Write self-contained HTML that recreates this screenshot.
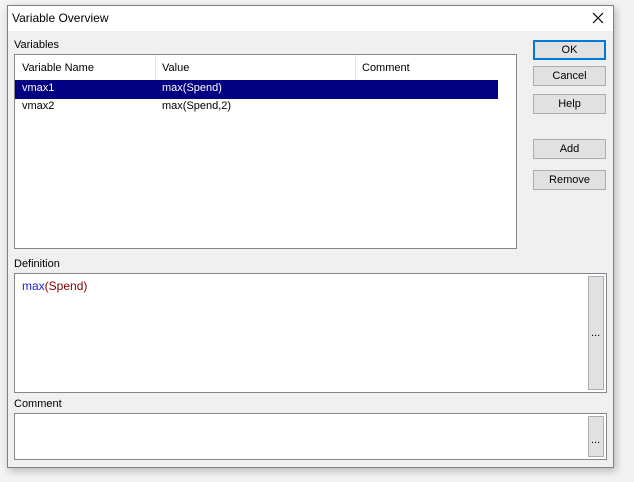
<!DOCTYPE html><html><head><style>
body{margin:0;width:634px;height:482px;background:#f3f3f3;position:relative;overflow:hidden;font-family:"Liberation Sans",sans-serif;font-size:11px;color:#000}
.a{position:absolute;box-sizing:border-box}
.win{left:7px;top:5px;width:607px;height:463px;background:#f0f0f0;border:1px solid #808080;box-shadow:2px 3px 8px rgba(0,0,0,.25)}
.btn{background:#e1e1e1;border:1px solid #adadad;text-align:center;line-height:19px;width:73px;height:20px;left:533px}
.box{background:#fff;border:1px solid #828790}
.t{position:absolute;white-space:nowrap}
</style></head><body>
<div class="a win"></div>
<div class="a" style="left:8px;top:6px;width:605px;height:25px;background:#fff"></div>
<div class="t" style="left:12px;top:11px;font-size:12px">Variable Overview</div>
<svg class="a" style="left:592px;top:12px" width="12" height="12"><path d="M1 1L11 11M11 1L1 11" stroke="#000" stroke-width="1.2"/></svg>
<div class="t" style="left:14px;top:39px">Variables</div>
<div class="a box" style="left:14px;top:54px;width:503px;height:195px"></div>
<div class="a" style="left:15px;top:55px;width:483px;height:25px;background:#fff"></div>
<div class="a" style="left:155px;top:55px;width:1px;height:25px;background:#e5e5e5"></div>
<div class="a" style="left:355px;top:55px;width:1px;height:25px;background:#e5e5e5"></div>
<div class="t" style="left:22px;top:62px">Variable Name</div>
<div class="t" style="left:162px;top:62px">Value</div>
<div class="t" style="left:362px;top:62px">Comment</div>
<div class="a" style="left:15px;top:80px;width:483px;height:19px;background:#000080"></div>
<div class="t" style="left:22px;top:82px;color:#fff">vmax1</div>
<div class="t" style="left:162px;top:82px;color:#fff">max(Spend)</div>
<div class="t" style="left:22px;top:100px">vmax2</div>
<div class="t" style="left:162px;top:100px">max(Spend,2)</div>
<div class="a btn" style="top:40px;border:2px solid #0078d7;line-height:17px">OK</div>
<div class="a btn" style="top:66px">Cancel</div>
<div class="a btn" style="top:94px">Help</div>
<div class="a btn" style="top:139px">Add</div>
<div class="a btn" style="top:170px">Remove</div>
<div class="t" style="left:14px;top:258px">Definition</div>
<div class="a box" style="left:14px;top:273px;width:593px;height:120px"></div>
<div class="t" style="left:22px;top:279px;font-size:12px"><span style="color:#2020e0">max</span><span style="color:#800000">(Spend)</span></div>
<div class="a" style="left:588px;top:276px;width:16px;height:114px;background:#e1e1e1;border:1px solid #adadad"></div>
<div class="t" style="left:591px;top:327px">...</div>
<div class="t" style="left:14px;top:398px">Comment</div>
<div class="a box" style="left:14px;top:413px;width:593px;height:47px"></div>
<div class="a" style="left:588px;top:416px;width:16px;height:41px;background:#e1e1e1;border:1px solid #adadad"></div>
<div class="t" style="left:591px;top:434px">...</div>
</body></html>
